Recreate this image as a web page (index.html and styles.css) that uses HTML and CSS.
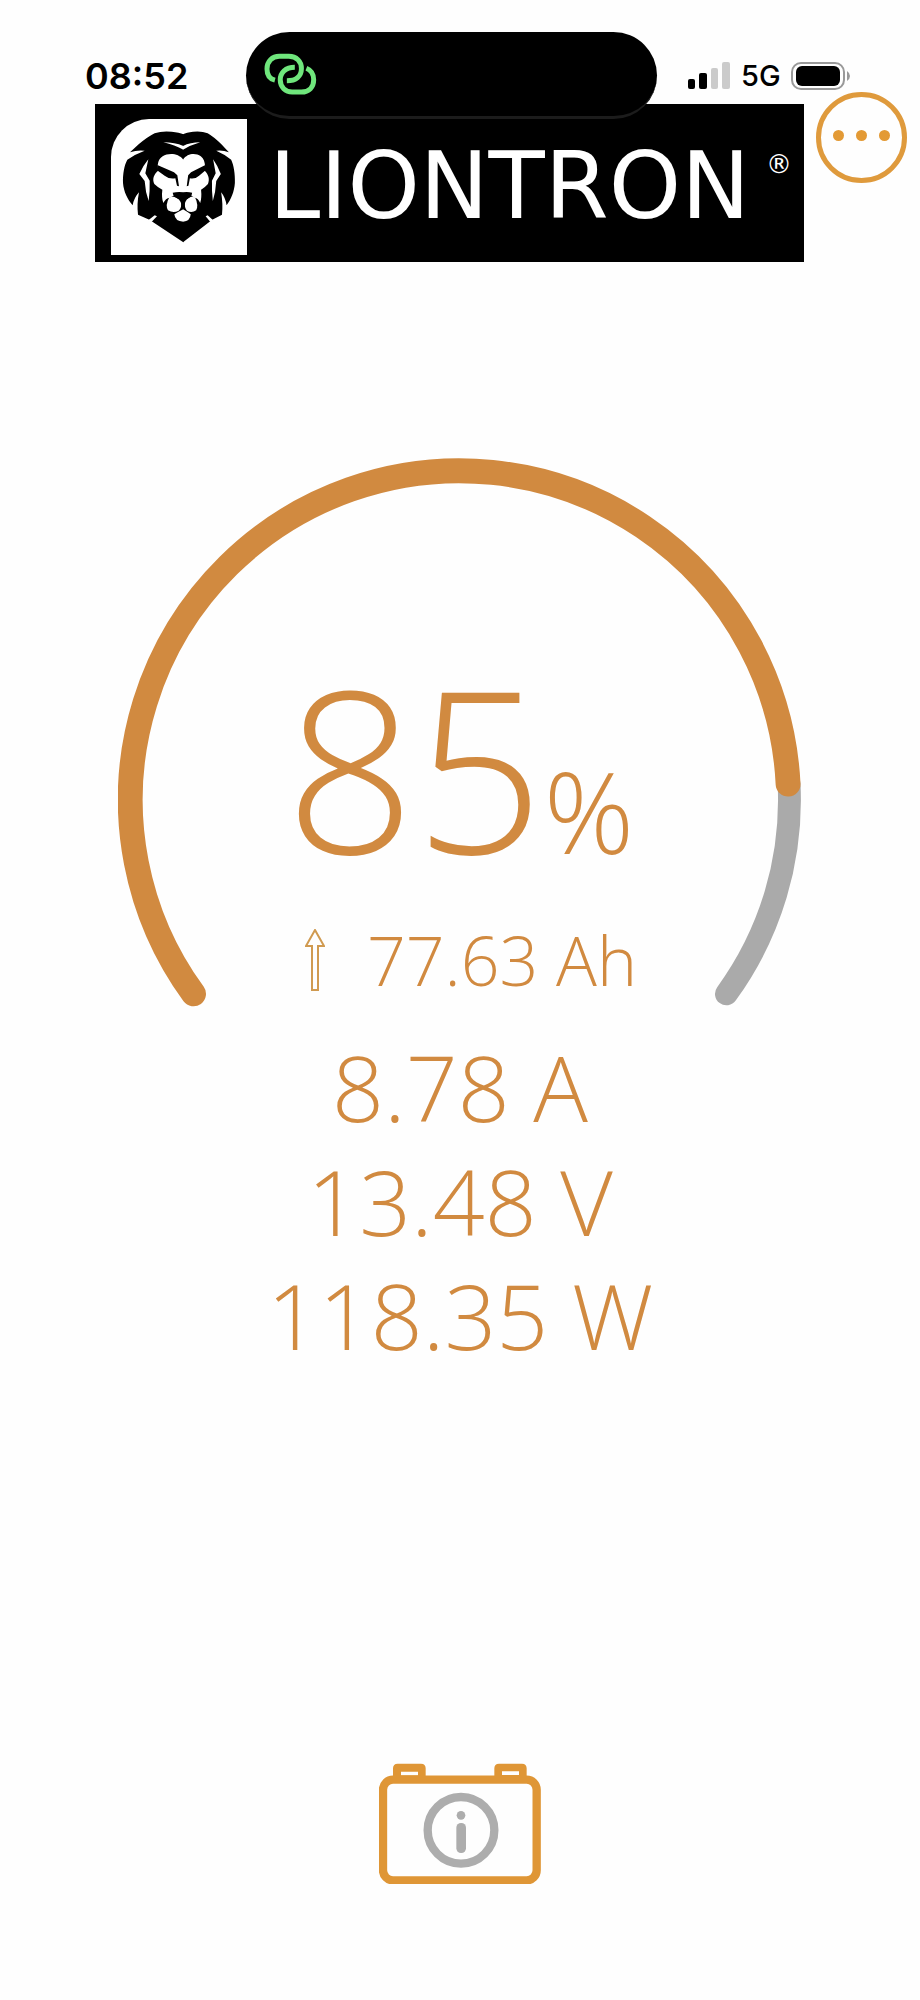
FILE: index.html
```html
<!DOCTYPE html>
<html lang="en">
<head>
  <meta charset="UTF-8" />
  <meta name="viewport" content="width=device-width, initial-scale=1.0" />
  <title>Liontron Battery</title>
  <link rel="stylesheet" href="styles.css">
</head>
<body>
  <!-- Status bar -->
  <div class="status-bar">
    <time class="clock">08:52</time>
    <div class="island">
      <svg class="link-icon" viewBox="552 97 160 128" aria-hidden="true">
        <path d="M585 179C569 175 561 162 561 145C561 122 577 107 598 107H627C650 107 665 122 665 144C665 167 649 181 621 181" />
        <path d="M645 140C617 140 601 156 601 178C601 200 617 215 637 215H665C688 215 702 200 702 178C702 160 695 149 680 143" />
      </svg>
    </div>
    <div class="status-right">
      <svg class="signal" viewBox="0 0 42 27" aria-hidden="true">
        <rect x="0" y="17" width="7" height="10" rx="2" />
        <rect x="11" y="11" width="8" height="16" rx="2" />
        <rect class="off" x="23" y="6" width="7" height="21" rx="2" />
        <rect class="off" x="34" y="0" width="8" height="27" rx="2" />
      </svg>
      <span class="network">5G</span>
      <svg class="phone-battery" viewBox="0 0 60 28" aria-hidden="true">
        <rect class="case" x="1" y="1" width="52" height="26" rx="9" />
        <rect x="5" y="4" width="44" height="20" rx="6" />
        <path class="tip" d="M56 9Q59 11 59 14T56 19Z" />
      </svg>
    </div>
  </div>

  <!-- Logo and menu -->
  <header class="top">
    <div class="banner">
      <svg class="lion" viewBox="33 26 408 408" role="img" aria-label="Lion">
        <defs>
          <g id="half">
            <path d="M250 72Q238 66 215 64Q185 61 164 69Q142 80 116 102L90 126Q112 118 134 121Q104 132 82 148C73 164 68 190 69 218C71 244 83 268 98 285Q102 262 117 246Q110 282 114 313L148 328L168 316L155 333L250 396Z" />
            <g class="cut">
              <path d="M190 96Q225 96 250 107V118Q225 105 190 96Z" />
              <path d="M145 147Q130 165 118 191L134 212Q136 245 146 272Q150 240 149 211L136 189Z" />
              <path d="M250 148C235 128 205 127 188 138C177 145 174 155 173 168L174 181C161 193 156 206 163 221Q174 232 187 238Q184 262 190 278Q197 263 209 262L222 256H250Z" />
              <path d="M208 261Q195 285 204 300Q220 309 236 301Q246 292 243 278Q239 265 222 259Z" />
              <path d="M250 297Q236 304 223 312Q225 333 250 334Z" />
              <path d="M146 329L164 315L171 318L155 334Z" />
            </g>
            <path d="M172 164L222 186L232 195L237 228L231 226L226 204Q207 207 194 196L171 180Z" />
            <path d="M218 247Q234 244 250 246V297L244 293V276Q241 267 221 258Z" />
          </g>
        </defs>
        <use href="#half" />
        <!-- the right half of the mane is a little narrower -->
        <use href="#half" transform="translate(464 0) scale(-.86 1)" />
      </svg>
      <h1 class="brand">LIONTRON<sup>®</sup></h1>
    </div>
    <button class="menu" type="button" aria-label="Menu">
      <span></span><span></span><span></span>
    </button>
  </header>

  <main>
    <div class="gauge">
      <svg class="arc" viewBox="118 458 688 552" role="img" aria-label="State of charge 85%">
        <path class="rest" d="M793 786A331 331 0 0 1 730 997" />
        <path class="level" d="M194 997A331 331 0 1 1 792 786" />
      </svg>
      <div class="readings">
        <p class="charge">85<span>%</span></p>
        <p class="capacity">
          <svg class="arrow" viewBox="0 0 20 62" aria-label="Charging">
            <path d="M10 1L19 17H13V61H7V17H1Z" />
          </svg>
          77.63 Ah
        </p>
        <p class="value">8.78 A</p>
        <p class="value">13.48 V</p>
        <p class="value">118.35 W</p>
      </div>
    </div>
  </main>

  <footer>
    <button class="info" type="button" aria-label="Battery info">
      <svg viewBox="54 70 486 364" aria-hidden="true">
        <rect class="line" x="66" y="120" width="461" height="302" rx="30" />
        <path class="line-fill" fill-rule="evenodd" d="M96 114V86Q96 72 110 72H180Q194 72 194 86V114ZM120 96V107H171V96Z" />
        <path class="line-fill" fill-rule="evenodd" d="M400 114V86Q400 72 414 72H483Q497 72 497 86V114ZM423 95V106H474V95Z" />
        <circle class="ring" cx="300" cy="272" r="100" />
        <circle class="mark" cx="300" cy="227" r="13" />
        <rect class="mark" x="286" y="250" width="29" height="90" rx="14" />
      </svg>
    </button>
  </footer>
</body>
</html>
```

FILE: styles.css
```css
* {
  box-sizing: border-box;
}
body {
  margin: 0;
  min-height: 100vh;
  display: flex;
  flex-direction: column;
  background: #fefefe;
  color: #d18a40;
  font-family: "Open Sans", sans-serif;
  font-weight: 300;
}
h1, p {
  margin: 0;
}
button {
  padding: 0;
  background: none;
  border: none;
  cursor: pointer;
}

/* status bar, the island hangs over the banner */
.status-bar {
  position: relative;
  z-index: 1;
  display: grid;
  grid-template-columns: 246px 1fr 263px;
  align-items: center;
  padding-top: 32px;
  margin-bottom: -15px;
  color: #000;
  font-family: Inter, sans-serif;
}
.clock {
  padding-left: 85px;
  font-size: 36px;
  font-weight: 600;
  line-height: 40px;
}
.island {
  height: 87px;
  display: flex;
  align-items: center;
  padding: 0 18px;
  background: #000;
  border-bottom: 3px solid #1c1c1c;
  border-radius: 44px;
}
.link-icon {
  width: 53px;
  fill: none;
  stroke: #6fe67c;
  stroke-width: 15;
}
.status-right {
  display: flex;
  align-items: center;
  padding-left: 31px;
}
.signal {
  width: 42px;
}
.signal .off {
  fill: #cbcbcb;
}
.network {
  margin: 0 10px 0 11px;
  font-size: 29px;
  font-weight: 500;
}
.phone-battery {
  width: 60px;
}
.case {
  fill: none;
  stroke: #999;
  stroke-width: 2;
}
.tip {
  fill: #999;
}

/* logo and menu */
.top {
  display: flex;
  align-items: flex-start;
  gap: 12px;
  padding: 0 13px 0 95px;
}
.banner {
  flex: 1;
  height: 158px;
  display: flex;
  align-items: center;
  gap: 22px;
  padding: 8px 12px 0 16px;
  background: #000;
  color: #fff;
}
.lion {
  flex: none;
  width: 136px;
  background: #fff;
  border-top-left-radius: 38px;
}
.lion .cut {
  fill: #fff;
}
.brand {
  flex: 1;
  display: flex;
  align-items: flex-start;
  justify-content: space-between;
  font-family: "DejaVu Sans", sans-serif;
  font-size: 92px;
  font-weight: 400;
  line-height: 90px;
}
.brand sup {
  font-size: 26px;
  font-weight: 400;
  line-height: 44px;
}
.menu {
  width: 91px;
  height: 91px;
  margin-top: -12px;
  display: flex;
  align-items: center;
  justify-content: center;
  gap: 12px;
  padding-bottom: 4px;
  border: 5px solid #df9a3c;
  border-radius: 50%;
}
.menu span {
  width: 11px;
  height: 11px;
  background: #e39a35;
  border-radius: 50%;
}

/* gauge, arc and readings share one cell */
.gauge {
  display: grid;
  justify-items: center;
  margin-top: 196px;
}
.arc,
.readings {
  grid-area: 1 / 1;
}
.arc {
  width: 100%;
  max-width: 684px;
  fill: none;
  stroke-linecap: round;
}
.level {
  stroke: #d18a40;
  stroke-width: 25;
}
.rest {
  stroke: #aaa;
  stroke-width: 23;
}
.readings {
  padding-top: 194px;
  text-align: center;
}
.charge {
  font-size: 226px;
  line-height: 228px;
}
.charge span {
  font-size: 112px;
  line-height: 1;
}
.capacity {
  display: flex;
  align-items: center;
  justify-content: center;
  gap: 42px;
  margin: 40px 0 30px;
  padding-left: 22px;
  font-size: 68px;
  line-height: 80px;
}
.arrow {
  width: 20px;
  fill: none;
  stroke: #d09a50;
  stroke-width: 2;
}
.value {
  font-size: 91px;
  line-height: 114px;
}

footer {
  margin-top: auto;
  padding-bottom: 111px;
  text-align: center;
}
.info svg {
  display: block;
  width: 162px;
}
.line {
  fill: none;
  stroke: #df9636;
  stroke-width: 25;
}
.line-fill {
  fill: #df9636;
}
.ring {
  fill: none;
  stroke: #adadad;
  stroke-width: 25;
}
.mark {
  fill: #adadad;
}
```
